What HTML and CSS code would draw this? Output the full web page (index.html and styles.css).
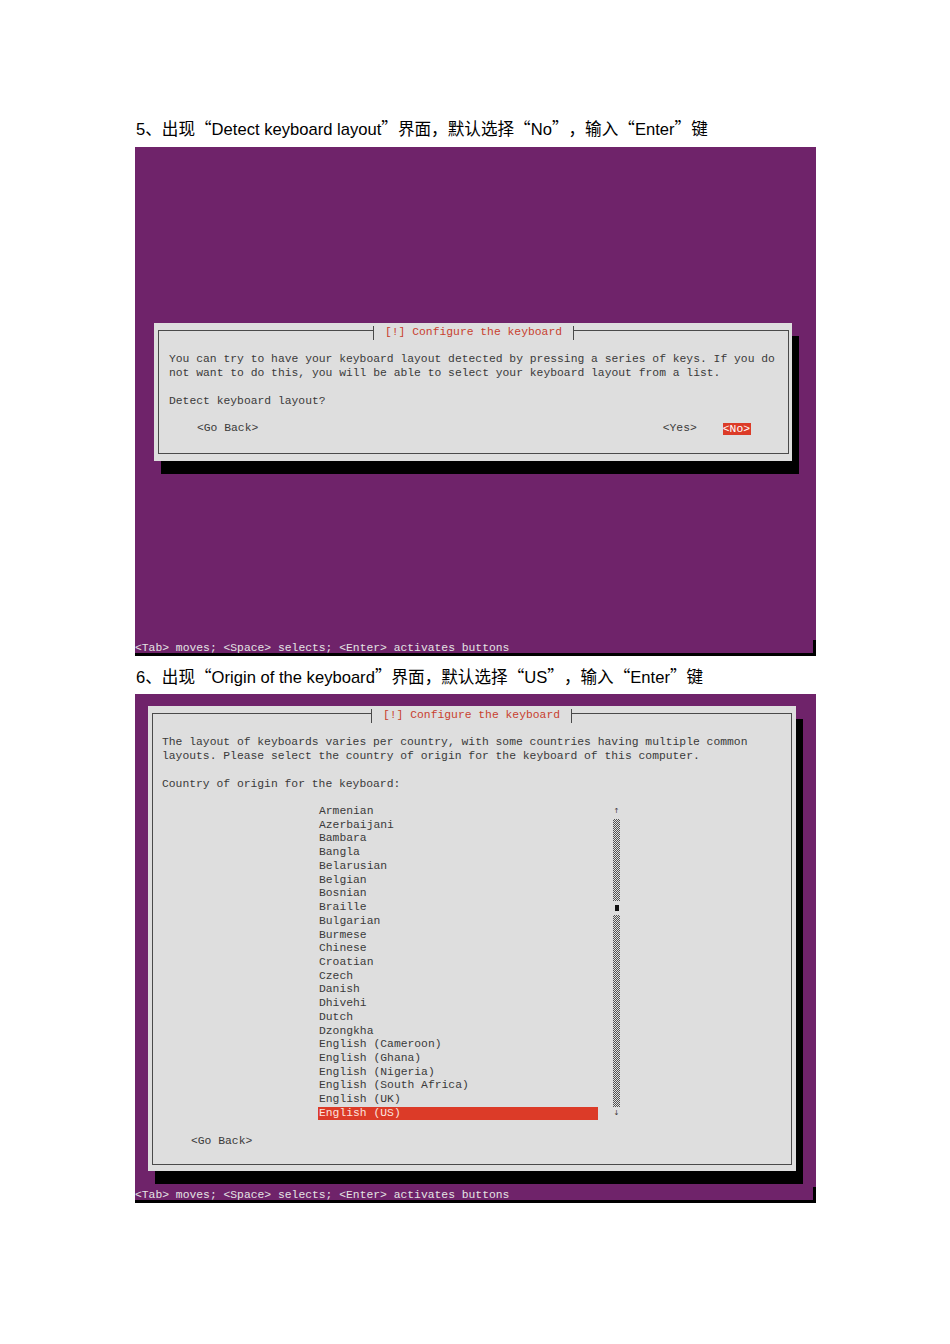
FILE: index.html
```html
<!DOCTYPE html>
<html lang="zh-CN">
<head>
  <meta charset="UTF-8" />
  <meta name="viewport" content="width=device-width, initial-scale=1.0"/>
  <title>键盘布局设置</title>
  <link rel="stylesheet" href="styles.css">
</head>
<body>
<div class="page">
  <!-- step 5 -->
  <p class="step first">5、出现<span class="q">“</span>Detect keyboard layout<span class="q">”</span>界面，默认选择<span class="q">“</span>No<span class="q">”</span>，输入<span class="q">“</span>Enter<span class="q">”</span>键</p>
  <div class="screen">
    <div class="dialog detect">
      <div class="frame">
        <div class="title">[!] Configure the keyboard</div>
        <div class="row"></div>
        <div class="row">You can try to have your keyboard layout detected by pressing a series of keys. If you do</div>
        <div class="row">not want to do this, you will be able to select your keyboard layout from a list.</div>
        <div class="row"></div>
        <div class="row">Detect keyboard layout?</div>
        <div class="row"></div>
        <div class="row buttons">
          <span class="btn back">&lt;Go Back&gt;</span>
          <span class="btn yes">&lt;Yes&gt;</span>
          <span class="btn no active">&lt;No&gt;</span>
        </div>
        <div class="row"></div>
      </div>
    </div>
    <div class="status">&lt;Tab&gt; moves; &lt;Space&gt; selects; &lt;Enter&gt; activates buttons</div>
  </div>

  <!-- step 6 -->
  <p class="step second">6、出现<span class="q">“</span>Origin of the keyboard<span class="q">”</span>界面，默认选择<span class="q">“</span>US<span class="q">”</span>，输入<span class="q">“</span>Enter<span class="q">”</span>键</p>
  <div class="screen">
    <div class="dialog origin">
      <div class="frame">
        <div class="title">[!] Configure the keyboard</div>
        <div class="row"></div>
        <div class="row">The layout of keyboards varies per country, with some countries having multiple common</div>
        <div class="row">layouts. Please select the country of origin for the keyboard of this computer.</div>
        <div class="row"></div>
        <div class="row">Country of origin for the keyboard:</div>
        <div class="row"></div>
        <div class="list">
          <div class="items">
            <div class="row">Armenian</div>
            <div class="row">Azerbaijani</div>
            <div class="row">Bambara</div>
            <div class="row">Bangla</div>
            <div class="row">Belarusian</div>
            <div class="row">Belgian</div>
            <div class="row">Bosnian</div>
            <div class="row">Braille</div>
            <div class="row">Bulgarian</div>
            <div class="row">Burmese</div>
            <div class="row">Chinese</div>
            <div class="row">Croatian</div>
            <div class="row">Czech</div>
            <div class="row">Danish</div>
            <div class="row">Dhivehi</div>
            <div class="row">Dutch</div>
            <div class="row">Dzongkha</div>
            <div class="row">English (Cameroon)</div>
            <div class="row">English (Ghana)</div>
            <div class="row">English (Nigeria)</div>
            <div class="row">English (South Africa)</div>
            <div class="row">English (UK)</div>
            <div class="row selected">English (US)</div>
          </div>
          <div class="scrollbar">
            <div class="arrow">↑</div>
            <div class="track upper"></div>
            <div class="thumb-row"><span class="thumb"></span></div>
            <div class="track lower"></div>
            <div class="arrow">↓</div>
          </div>
        </div>
        <div class="row"></div>
        <div class="row buttons">
          <span class="btn back">&lt;Go Back&gt;</span>
        </div>
        <div class="row"></div>
      </div>
    </div>
    <div class="status">&lt;Tab&gt; moves; &lt;Space&gt; selects; &lt;Enter&gt; activates buttons</div>
  </div>
</div>
</body>
</html>
```

FILE: styles.css
```css
* {
  box-sizing: border-box;
}

body {
  margin: 0;
  background: #ffffff;
}

.page {
  padding: 117px 0 40px 135px;
}

/* step headings */
.step {
  margin: 0;
  height: 22px;
  padding-left: 1px;
  font-family: "Liberation Sans", "Noto Sans CJK SC", sans-serif;
  font-size: 16.6px;
  line-height: 22px;
  color: #000;
  white-space: nowrap;
  text-spacing-trim: space-all;
}
.step .q {
  font-family: "Noto Sans CJK SC", sans-serif;
}
.step.first {
  margin-bottom: 8px;
}
.step.second {
  margin: 9px 0 7px;
}

/* installer screen: 100 x 37 cells */
.screen {
  width: 681px;
  height: 509px;
  background: #6f236a;
  display: flex;
  flex-direction: column;
  font-family: "Liberation Mono", monospace;
  font-size: 11.35px;
  line-height: 13.73px;
}

.dialog {
  background: #dedede;
  color: #3a3a3a;
  box-shadow: 7px 13px 0 #000;
}
.detect {
  width: 638px;
  margin: 176px 0 0 19px;
  padding: 7px 3px 7px 4px;
}
.origin {
  width: 648px;
  margin: 12px 0 0 13px;
  padding: 7px 4px 6px 4px;
}

.frame {
  border: 1px solid #4a4a4a;
  display: flex;
  flex-direction: column;
  padding: 0 10px 4px 10px;
}
.origin .frame {
  padding: 0 10px 2px 9px;
}

.title {
  align-self: center;
  height: 13.73px;
  margin-top: -5px;
  padding: 0 11px;
  border-left: 1px solid #4a4a4a;
  border-right: 1px solid #4a4a4a;
  background: #dedede;
  color: #c8412e;
  white-space: pre;
}

.row {
  height: 13.73px;
  white-space: pre;
}

.buttons {
  display: flex;
  align-items: center;
  padding-right: 27px;
}
.detect .back {
  margin-left: 28px;
}
.origin .back {
  margin-left: 29px;
}
.yes {
  margin-left: auto;
}
.no {
  margin-left: 26px;
}
.btn.active {
  display: inline-block;
  line-height: 12px;
  padding: 0 1px 0 0;
  background: #dc3b28;
  color: #fff;
}

/* country list */
.list {
  display: flex;
  margin-left: 156px;
}
.items {
  width: 280px;
}
.items .row {
  padding-left: 1px;
}
.items .selected {
  background: #dc3b28;
  color: #fbe3df;
  height: 13px;
}

.scrollbar {
  width: 7px;
  margin-left: 15px;
  display: flex;
  flex-direction: column;
}
.arrow {
  height: 13.73px;
  font-size: 7px;
  text-align: center;
  color: #333;
  font-family: "DejaVu Sans", sans-serif;
}
.track {
  background: repeating-conic-gradient(#505050 0 25%, #e0e0e0 0 50%) 0 0 / 2px 2px;
}
.track.upper {
  height: 82.38px;
}
.track.lower {
  height: 192.22px;
}
.thumb-row {
  height: 13.73px;
  display: flex;
  align-items: center;
  justify-content: center;
}
.thumb {
  width: 4px;
  height: 6px;
  background: #111;
}

/* bottom help line */
.status {
  margin-top: auto;
  height: 16px;
  padding-top: 2px;
  border-right: 3px solid #000;
  border-bottom: 3px solid #000;
  color: #e4e4e4;
  white-space: pre;
}
```
